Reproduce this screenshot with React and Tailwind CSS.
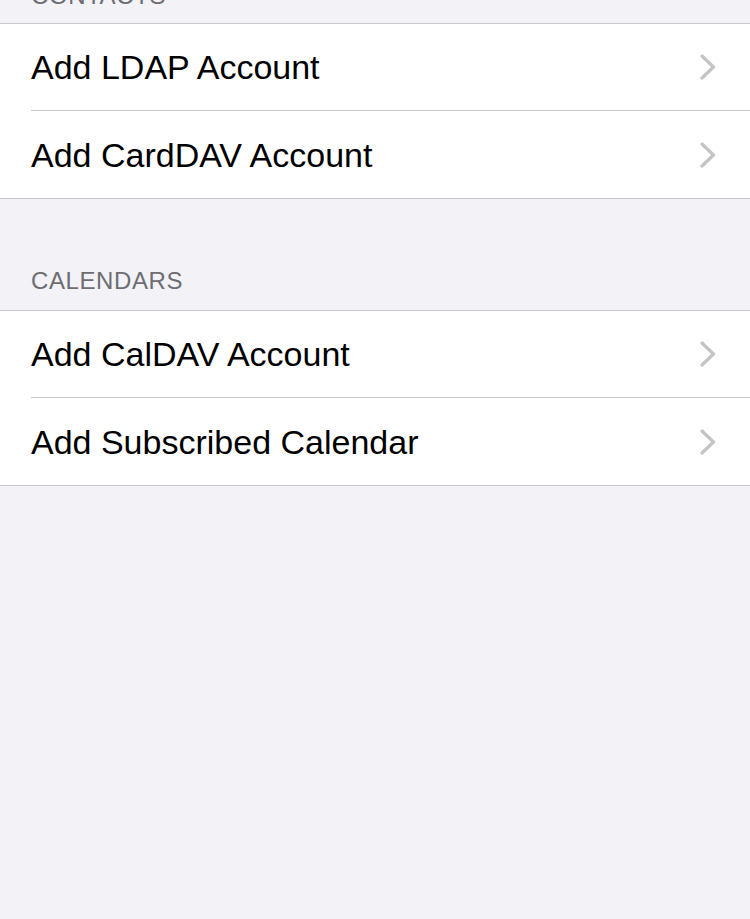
const SECTIONS = [
  { title: 'CONTACTS', items: ['Add LDAP Account', 'Add CardDAV Account'] },
  { title: 'CALENDARS', items: ['Add CalDAV Account', 'Add Subscribed Calendar'] },
]

const Chevron = () => (
  <svg width="16" height="26" viewBox="0 0 16 26" className="shrink-0">
    <path
      d="M2 2 L13.5 13 L2 24"
      fill="none"
      stroke="#c4c4c7"
      strokeWidth="3.2"
      strokeLinecap="round"
      strokeLinejoin="round"
    />
  </svg>
)

export default function App() {
  return (
    <div
      className="h-[919px] overflow-hidden bg-[#f2f2f7]"
      style={{ fontFamily: '"Liberation Sans", Arial, sans-serif' }}
    >
      {SECTIONS.map((section, i) => (
        <div key={section.title}>
          {/* Section header */}
          <div
            className={`flex items-end overflow-hidden px-[31px] ${
              i === 0 ? 'h-[23px] pb-[15px]' : 'h-[111px] pb-[17px]'
            }`}
          >
            <span className="text-[24px] leading-none text-[#6d6d72] tracking-[0.6px] whitespace-nowrap">
              {section.title}
            </span>
          </div>

          {/* Rows */}
          <div className="bg-white border-y border-[#c8c7cc]">
            {section.items.map((item, j) => (
              <div key={item} className="h-[87px] pl-[31px] flex">
                <div
                  className={`flex-1 flex items-center justify-between pr-[34px] ${
                    j < section.items.length - 1 ? 'border-b border-[#c8c7cc]' : ''
                  }`}
                >
                  <span className="text-[34px] leading-none text-black">
                    {item}
                  </span>
                  <Chevron />
                </div>
              </div>
            ))}
          </div>
        </div>
      ))}
    </div>
  )
}
